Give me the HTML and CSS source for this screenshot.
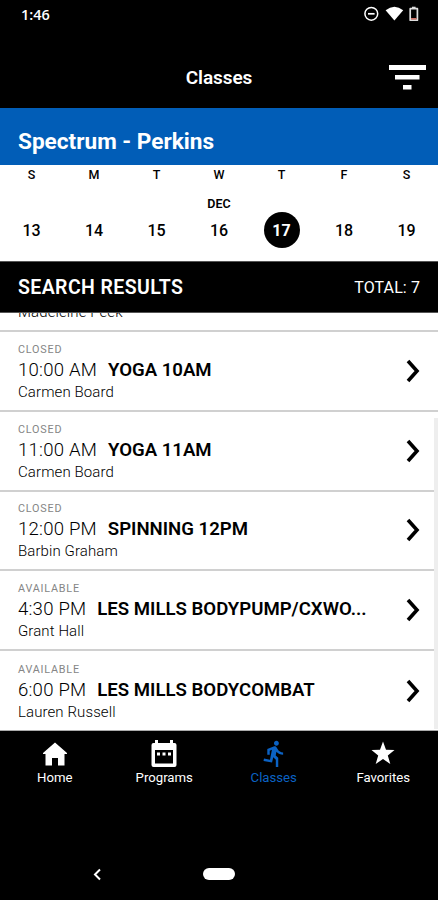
FILE: index.html
```
<!DOCTYPE html>
<html lang="en">
<head>
    <meta charset="UTF-8">
    <meta name="viewport" content="width=device-width, initial-scale=1.0">
    <title>Classes</title>
    <link rel="stylesheet" href="styles.css">
</head>
<body>
    <div class="status-bar">
        <span class="clock">1:46</span>
        <svg width="56" height="18" viewBox="0 0 56 18">
            <circle cx="7.3" cy="8.8" r="6.4" fill="none" stroke="#fff" stroke-width="1.5"/>
            <path d="M4 8.8h6.6" stroke="#fff" stroke-width="1.7"/>
            <path d="M21.6 5.2q8.8-7 17.6 0L30.4 15.500z" fill="#fff"/>
            <path d="M46.200 3.700h7.200v11.500h-7.200z" fill="none" stroke="#ddd" stroke-width="1.700" stroke-linejoin="round"/>
            <path d="M48 1.700h3.600v2H48z" fill="#ddd"/>
            <path d="M47 13.800h5.600" stroke="#d8766a" stroke-width="1.500"/>
        </svg>
    </div>

    <header>
        <h1>Classes</h1>
        <svg class="filter" width="37" height="25" viewBox="0 0 37 25" fill="#fff">
            <path d="M0 0h37v5H0zM6 10h24.500v4.500H6zM14 20h8.500v4.500H14z"/>
        </svg>
    </header>

    <h2 class="location">Spectrum - Perkins</h2>

    <div class="calendar">
        <div class="day"><span>S</span><em></em><b>13</b></div>
        <div class="day"><span>M</span><em></em><b>14</b></div>
        <div class="day"><span>T</span><em></em><b>15</b></div>
        <div class="day"><span>W</span><em>DEC</em><b>16</b></div>
        <div class="day selected"><span>T</span><em></em><b>17</b></div>
        <div class="day"><span>F</span><em></em><b>18</b></div>
        <div class="day"><span>S</span><em></em><b>19</b></div>
    </div>

    <div class="results-bar">
        <h3>SEARCH RESULTS</h3>
        <span>TOTAL: 7</span>
    </div>

    <!-- List is scrolled, first row is partly hidden -->
    <div class="results">
        <div class="row">
            <div class="info">
                <p class="person">Madeleine Peek</p>
            </div>
        </div>
        <div class="row">
            <div class="info">
                <p class="state">CLOSED</p>
                <p class="title"><span>10:00 AM</span><strong>YOGA 10AM</strong></p>
                <p class="person">Carmen Board</p>
            </div>
            <svg class="chevron" width="14" height="24" viewBox="0 0 14 24"><path d="M2 2l9 10-9 10"/></svg>
        </div>
        <div class="row">
            <div class="info">
                <p class="state">CLOSED</p>
                <p class="title"><span>11:00 AM</span><strong>YOGA 11AM</strong></p>
                <p class="person">Carmen Board</p>
            </div>
            <svg class="chevron" width="14" height="24" viewBox="0 0 14 24"><path d="M2 2l9 10-9 10"/></svg>
        </div>
        <div class="row">
            <div class="info">
                <p class="state">CLOSED</p>
                <p class="title"><span>12:00 PM</span><strong>SPINNING 12PM</strong></p>
                <p class="person">Barbin Graham</p>
            </div>
            <svg class="chevron" width="14" height="24" viewBox="0 0 14 24"><path d="M2 2l9 10-9 10"/></svg>
        </div>
        <div class="row">
            <div class="info">
                <p class="state">AVAILABLE</p>
                <p class="title"><span>4:30 PM</span><strong>LES MILLS BODYPUMP/CXWO...</strong></p>
                <p class="person">Grant Hall</p>
            </div>
            <svg class="chevron" width="14" height="24" viewBox="0 0 14 24"><path d="M2 2l9 10-9 10"/></svg>
        </div>
        <div class="row">
            <div class="info">
                <p class="state">AVAILABLE</p>
                <p class="title"><span>6:00 PM</span><strong>LES MILLS BODYCOMBAT</strong></p>
                <p class="person">Lauren Russell</p>
            </div>
            <svg class="chevron" width="14" height="24" viewBox="0 0 14 24"><path d="M2 2l9 10-9 10"/></svg>
        </div>
        <div class="scrollbar"></div>
    </div>

    <nav>
        <a class="tab">
            <svg width="28" height="28" viewBox="0 0 28 28" fill="#fff">
                <path d="M14 2.500L26 13v1h-2.500v11.500H17v-7.500h-6v7.500H4.500V14H2v-1z"/>
            </svg>
            <span>Home</span>
        </a>
        <a class="tab">
            <svg width="28" height="28" viewBox="0 0 28 28" fill="#fff">
                <path fill-rule="evenodd" d="M5 0h3v3h12V0h3v3h1.500a2 2 0 0 1 2 2v20a2 2 0 0 1-2 2h-21a2 2 0 0 1-2-2V5a2 2 0 0 1 2-2H5zM5 10v13.500h18V10z"/>
                <path d="M7 12.500h3v3H7zM12.500 12.500h3v3h-3zM18 12.500h3v3h-3z"/>
            </svg>
            <span>Programs</span>
        </a>
        <a class="tab active">
            <svg width="28" height="28" viewBox="0 0.800 23 23" fill="#0b62c4">
                <path d="M13.490 5.480c1.100 0 2-.9 2-2s-.9-2-2-2-2 .9-2 2 .9 2 2 2zm-3.600 13.900l1-4.400 2.100 2v6h2v-7.500l-2.100-2 .6-3c1.300 1.500 3.300 2.500 5.500 2.500v-2c-1.900 0-3.500-1-4.300-2.400l-1-1.600c-.4-.6-1-1-1.700-1-.3 0-.5.1-.8.1l-5.200 2.200v4.700h2v-3.400l1.800-.7-1.600 8.100-4.900-1-.4 2 7 1.400z"/>
            </svg>
            <span>Classes</span>
        </a>
        <a class="tab">
            <svg width="28" height="28" viewBox="0 0 28 28" fill="#fff">
                <path d="M14 1.500l3 8.300 8.500.2-6.700 5.400 2.500 8.600-7.300-5-7.300 5 2.500-8.600L2.500 10l8.500-.2z"/>
            </svg>
            <span>Favorites</span>
        </a>
    </nav>

    <div class="system-bar">
        <svg class="back" width="9" height="13" viewBox="0 0 9 13"><path d="M7 1.500l-5 5 5 5"/></svg>
        <div class="pill"></div>
    </div>
</body>
</html>
```
FILE: styles.css
```
* {
    margin: 0;
    padding: 0;
    box-sizing: border-box;
}
body {
    background: #000;
    height: 900px;
    display: flex;
    flex-direction: column;
    overflow: hidden;
    color: #000;
    font-family: Roboto, sans-serif;
}
svg {
    display: block;
    flex-shrink: 0;
}
.status-bar {
    height: 46px;
    padding: 5px 18px 0 21px;
    display: flex;
    justify-content: space-between;
    color: #fff;
}
.clock {
    font-family: "Open Sans", sans-serif;
    font-size: 14.5px;
    font-weight: 600;
    line-height: 20px;
}
header {
    height: 62px;
    display: grid;
    grid-template-columns: 1fr auto 1fr;
    align-items: center;
    color: #fff;
}
h1 {
    grid-column: 2;
    font-size: 19px;
    font-weight: 600;
    letter-spacing: -0.1px;
}
.filter {
    justify-self: end;
    margin-right: 12px;
}
.location {
    height: 57px;
    padding: 21px 18px 0;
    background: #015db7;
    color: #fff;
    font-size: 22.6px;
    line-height: 26px;
    font-weight: 700;
}
.calendar {
    height: 96px;
    background: #fff;
    display: grid;
    grid-template-columns: repeat(7, 62.5px);
    justify-content: center;
}
.day {
    display: flex;
    flex-direction: column;
    align-items: center;
}
.day span {
    height: 20px;
    font-size: 12.5px;
    line-height: 20px;
    font-weight: 500;
}
.day em {
    height: 27px;
    padding-top: 11px;
    font-size: 12.5px;
    line-height: 16px;
    font-style: normal;
    font-weight: 600;
}
.day b {
    width: 36px;
    height: 36px;
    border-radius: 50%;
    text-align: center;
    font-size: 16px;
    line-height: 38px;
    font-weight: 500;
}
.day.selected b {
    background: #000;
    color: #fff;
    font-weight: 700;
}
.results-bar {
    height: 52px;
    padding: 0 18px;
    display: flex;
    align-items: center;
    justify-content: space-between;
    border-top: 1px solid #555;
    border-bottom: 1px solid #555;
    color: #fff;
}
.results-bar h3 {
    font-size: 19.5px;
    font-weight: 600;
    letter-spacing: 0.4px;
}
.results-bar span {
    font-size: 16px;
    letter-spacing: 0.1px;
}
.results {
    position: relative;
    height: 418px;
    background: #fff;
    overflow: hidden;
    display: flex;
    flex-direction: column;
    justify-content: flex-end;
}
.row {
    height: 79.8px;
    flex-shrink: 0;
    padding: 0 18px;
    display: flex;
    align-items: flex-end;
    justify-content: space-between;
    border-bottom: 2px solid #d0d0d0;
}
.row:nth-last-child(2) {
    border-bottom: 1px solid #aaa;
}
.info {
    padding-bottom: 8px;
}
.state {
    font-size: 10.8px;
    line-height: 14px;
    letter-spacing: 0.8px;
    color: #858585;
}
.title {
    display: flex;
    gap: 11px;
    font-size: 18.6px;
    line-height: 26px;
    white-space: nowrap;
}
.title span {
    font-weight: 300;
    letter-spacing: 0.2px;
}
.title strong {
    font-weight: 600;
}
.person {
    font-size: 15px;
    line-height: 19px;
    font-weight: 300;
    letter-spacing: 0.1px;
}
.chevron {
    margin-bottom: 27px;
    fill: none;
    stroke: #000;
    stroke-width: 3.6;
}
.scrollbar {
    position: absolute;
    top: 105px;
    right: 0;
    width: 4px;
    height: 311px;
    background: #eee;
}
nav {
    height: 60px;
    padding-top: 9px;
    display: grid;
    grid-template-columns: repeat(4, 1fr);
    color: #fff;
}
.tab {
    display: flex;
    flex-direction: column;
    align-items: center;
    font-size: 13.2px;
    line-height: 20px;
}
.tab.active {
    color: #0b62c4;
}
.system-bar {
    margin-top: auto;
    height: 52px;
    display: grid;
    grid-template-columns: 1fr 32px 1fr;
    align-items: center;
}
.back {
    margin-left: 93px;
    fill: none;
    stroke: #fff;
    stroke-width: 2;
}
.pill {
    height: 12px;
    border-radius: 6px;
    background: #fff;
}
```
